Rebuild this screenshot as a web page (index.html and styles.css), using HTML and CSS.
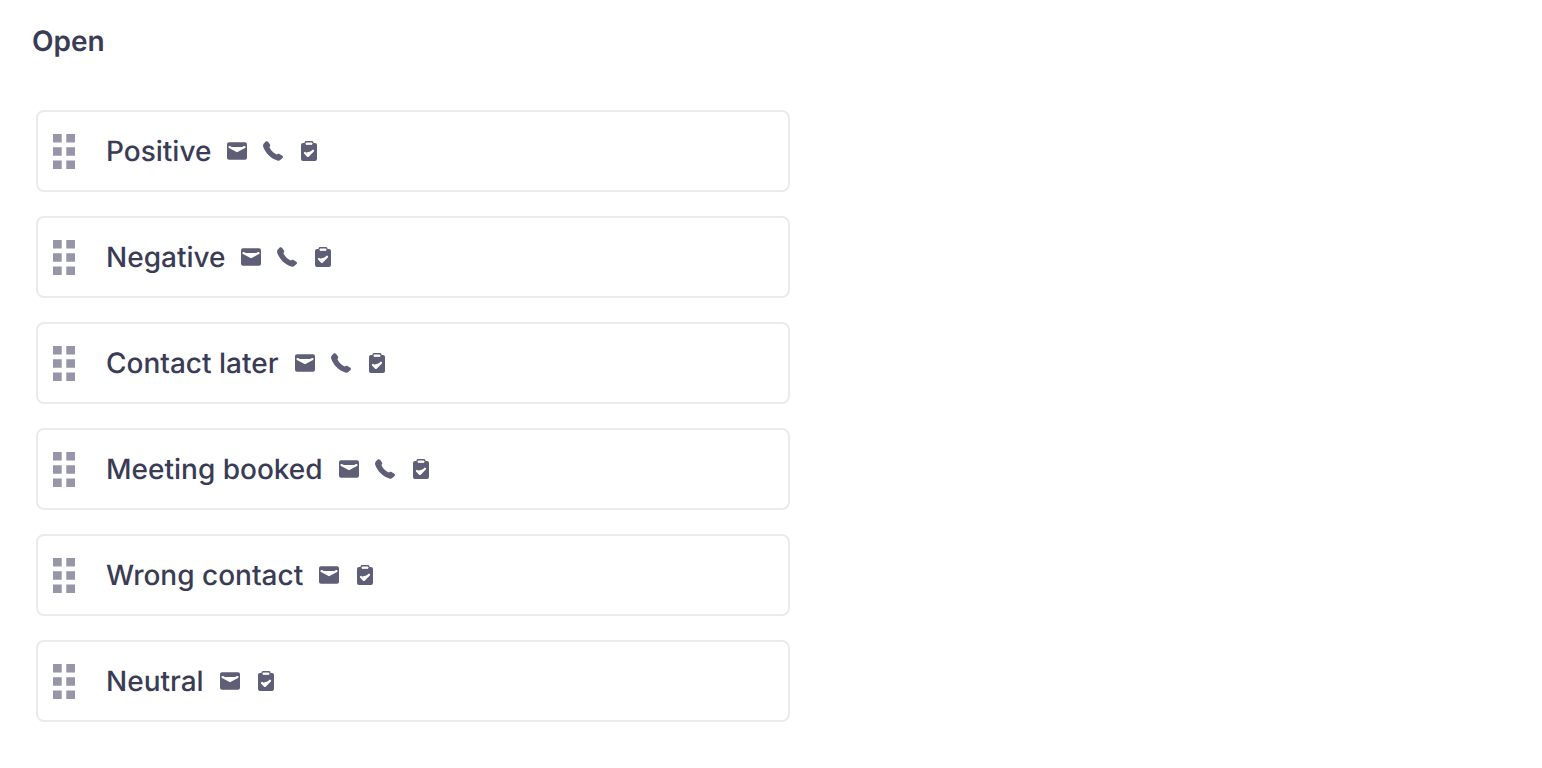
FILE: index.html
```html
<!DOCTYPE html>
<html lang="en">
<head>
<meta charset="utf-8">
<title>Open</title>
<link rel="stylesheet" href="styles.css">
</head>
<body>
<svg class="defs" width="0" height="0" aria-hidden="true">
  <symbol id="grip" viewBox="0 0 22 35"><path d="M0 0h8.700v8.500H0zM13.300 0H22v8.500h-8.700zM0 13.300h8.700v8.500H0zM13.300 13.300H22v8.500h-8.700zM0 26.500h8.700V35H0zM13.300 26.500H22V35h-8.700z"/></symbol>
  <symbol id="mail" viewBox="0 0 20 17.500"><path d="M2 0h16a2 2 0 0 1 2 2v13.500a2 2 0 0 1-2 2H2a2 2 0 0 1-2-2V2a2 2 0 0 1 2-2z"/><path class="cut" d="M2.500 4.800l7.500 4 7.500-4" fill="none" stroke-width="2.200" stroke-linecap="round"/></symbol>
  <symbol id="phone" viewBox="0 0 20 20"><path d="M.6 2.800 2.700.6C3.400-.1 4.400 0 5 .8L7 3.600c.4.700.3 1.400-.2 1.900l-.4.600c1 2.900 4.600 6.500 7.500 7.500l.7-.5c.6-.5 1.300-.6 1.900-.2l2.800 1.800c.8.600.9 1.500.2 2.200l-2.200 2.100c-.8.700-1.900.9-3 .5C8 17.600 2.400 12 .3 6c-.4-1.100-.3-2.300.3-3.200z"/></symbol>
  <symbol id="clip" viewBox="0 0 16 20"><path d="M5 0h6a1.500 1.500 0 0 1 1.500 1.500V2H14a2 2 0 0 1 2 2v14a2 2 0 0 1-2 2H2a2 2 0 0 1-2-2V4a2 2 0 0 1 2-2h1.500v-.5A1.500 1.500 0 0 1 5 0z"/><path class="cut" d="M5 2h6v1.300H5z"/><path class="cut" d="M4 12l2.900 2.900L12 9.700" fill="none" stroke-width="2.300" stroke-linecap="round" stroke-linejoin="round"/></symbol>
</svg>
<main class="page">
  <h1 class="title">Open</h1>
  <ul class="list">
    <li class="row"><svg class="grip"><use href="#grip"/></svg><span class="label">Positive</span><span class="icons"><svg class="ic mail"><use href="#mail"/></svg><svg class="ic phone"><use href="#phone"/></svg><svg class="ic clip"><use href="#clip"/></svg></span></li>
    <li class="row"><svg class="grip"><use href="#grip"/></svg><span class="label">Negative</span><span class="icons"><svg class="ic mail"><use href="#mail"/></svg><svg class="ic phone"><use href="#phone"/></svg><svg class="ic clip"><use href="#clip"/></svg></span></li>
    <li class="row"><svg class="grip"><use href="#grip"/></svg><span class="label">Contact later</span><span class="icons"><svg class="ic mail"><use href="#mail"/></svg><svg class="ic phone"><use href="#phone"/></svg><svg class="ic clip"><use href="#clip"/></svg></span></li>
    <li class="row"><svg class="grip"><use href="#grip"/></svg><span class="label">Meeting booked</span><span class="icons"><svg class="ic mail"><use href="#mail"/></svg><svg class="ic phone"><use href="#phone"/></svg><svg class="ic clip"><use href="#clip"/></svg></span></li>
    <li class="row"><svg class="grip"><use href="#grip"/></svg><span class="label">Wrong contact</span><span class="icons"><svg class="ic mail"><use href="#mail"/></svg><svg class="ic clip"><use href="#clip"/></svg></span></li>
    <li class="row"><svg class="grip"><use href="#grip"/></svg><span class="label">Neutral</span><span class="icons"><svg class="ic mail"><use href="#mail"/></svg><svg class="ic clip"><use href="#clip"/></svg></span></li>
  </ul>
</main>
</body>
</html>
```
FILE: styles.css
```css
* { box-sizing: border-box; }
html, body { margin: 0; background: #fff; }
body { font-family: Inter, "Liberation Sans", sans-serif; color: #3a3c56; text-rendering: geometricPrecision; }
.defs { display: block; height: 0; }
.page { width: 826px; padding: 24px 36px 0 32px; }
.title { margin: 0; font-size: 28px; line-height: 34px; font-weight: 600; }
.list { list-style: none; margin: 52px 0 0 4px; padding: 0; display: flex; flex-direction: column; gap: 24px; }
.row { display: flex; align-items: center; height: 82px; padding-left: 15px; border: 2px solid #ebebee; border-radius: 8px; }
.grip { width: 22px; height: 35px; fill: #9696a8; flex: none; margin-right: 31px; }
.label { font-size: 28px; line-height: 34px; font-weight: 450; letter-spacing: 0; }
.icons { display: flex; align-items: center; margin-left: 16px; gap: 18px; }
.ic { flex: none; fill: #5e5e77; stroke: none; }
.mail { width: 20px; height: 18px; }
.phone { width: 20px; height: 20px; margin-left: -2px; }
.clip { width: 16px; height: 20px; }
.cut { stroke: #fff; fill: #fff; }
```
